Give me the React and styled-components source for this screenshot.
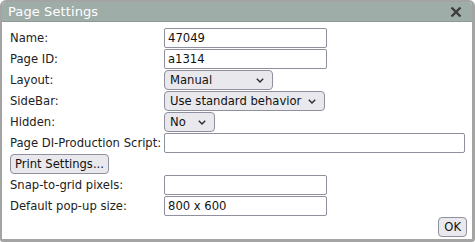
import React from "react";
import styled, { createGlobalStyle } from "styled-components";

const GlobalStyle = createGlobalStyle`
  html, body {
    margin: 0;
    padding: 0;
    background: #ffffff;
  }
  body {
    font-family: "DejaVu Sans", Verdana, sans-serif;
  }
`;

const font = `"DejaVu Sans", Verdana, sans-serif`;

const Dialog = styled.div`
  box-sizing: border-box;
  width: 475px;
  height: 242px;
  border: 2px solid #a4a4a4;
  border-bottom-width: 3px;
  border-right-width: 3px;
  border-radius: 6px 6px 3px 3px;
  background: #ffffff;
  display: flex;
  flex-direction: column;
  overflow: hidden;
`;

const TitleBar = styled.div`
  height: 19px;
  background: #9fada9;
  border-bottom: 1px solid #8c9995;
  display: flex;
  align-items: center;
  justify-content: space-between;
  padding: 0 10px 0 6px;
  color: #ffffff;
  font-family: ${font};
  font-size: 13px;
  letter-spacing: 0.1px;
`;

const CloseButton = styled.span`
  display: flex;
  width: 12px;
  height: 12px;
  cursor: pointer;
`;

const Body = styled.div`
  flex: 1;
  display: flex;
  flex-direction: column;
  padding: 5px 5px 0 8px;
`;

const Form = styled.div`
  display: grid;
  grid-template-columns: 154px 1fr;
  grid-auto-rows: 21px;
  align-items: center;
`;

const Label = styled.label`
  font-family: ${font};
  font-size: 11.6px;
  color: #222;
  white-space: nowrap;
`;

const Field = styled.div`
  display: flex;
  align-items: center;
`;

const TextInput = styled.input`
  box-sizing: border-box;
  width: ${({ $wide }) => ($wide ? "301px" : "163px")};
  height: 20px;
  border: 1px solid #8f8f9d;
  border-radius: 2px;
  padding: 0 3px;
  font-family: ${font};
  font-size: 11.6px;
  color: #111;
  background: #fff;
  outline: none;
`;

const SelectWrap = styled.div`
  position: relative;
  display: inline-flex;
  width: ${({ $w }) => $w}px;
  height: 20px;
`;

const Select = styled.select`
  box-sizing: border-box;
  appearance: none;
  width: 100%;
  height: 20px;
  border: 1px solid #8f8f9d;
  border-radius: 4px;
  padding: 0 20px 0 5px;
  font-family: ${font};
  font-size: 11.6px;
  color: #111;
  background-color: #e9e9ed;
`;

const Chevron = styled.svg`
  position: absolute;
  right: 9px;
  top: 8px;
  pointer-events: none;
`;

const Button = styled.button`
  box-sizing: border-box;
  height: 20px;
  border: 1px solid #8f8f9d;
  border-radius: 4px;
  background: #e9e9ed;
  padding: 0 ${({ $pad }) => $pad}px;
  font-family: ${font};
  font-size: 11.6px;
  color: #111;
  cursor: pointer;
`;

const ButtonRow = styled.div`
  grid-column: 1 / 3;
  display: flex;
  align-items: center;
`;

const Footer = styled.div`
  display: flex;
  justify-content: flex-end;
  padding-top: 1px;
`;

const rows = [
  { label: "Name:", value: "47049" },
  { label: "Page ID:", value: "a1314" },
];

function Dropdown({ width, value, options }) {
  return (
    <SelectWrap $w={width}>
      <Select defaultValue={value}>
        {options.map((o) => (
          <option key={o}>{o}</option>
        ))}
      </Select>
      <Chevron width="8" height="5" viewBox="0 0 8 5">
        <path d="M0.8 0.8 L4 4 L7.2 0.8" fill="none" stroke="#2b2b2b" strokeWidth="1.4" />
      </Chevron>
    </SelectWrap>
  );
}

export default function App() {
  return (
    <>
      <GlobalStyle />
      <Dialog>
        <TitleBar>
          <span>Page Settings</span>
          <CloseButton>
            <svg width="12" height="12" viewBox="0 0 12 12">
              <path d="M1.5 1.5 L10.5 10.5 M10.5 1.5 L1.5 10.5" stroke="#3c3c3c" strokeWidth="2.4" />
            </svg>
          </CloseButton>
        </TitleBar>
        <Body>
          <Form>
            {rows.map((r) => (
              <React.Fragment key={r.label}>
                <Label>{r.label}</Label>
                <Field>
                  <TextInput defaultValue={r.value} />
                </Field>
              </React.Fragment>
            ))}
            <Label>Layout:</Label>
            <Field>
              <Dropdown width={109} value="Manual" options={["Manual", "Automatic"]} />
            </Field>
            <Label>SideBar:</Label>
            <Field>
              <Dropdown
                width={161}
                value="Use standard behavior"
                options={["Use standard behavior", "Show", "Hide"]}
              />
            </Field>
            <Label>Hidden:</Label>
            <Field>
              <Dropdown width={51} value="No" options={["No", "Yes"]} />
            </Field>
            <Label>Page DI-Production Script:</Label>
            <Field>
              <TextInput $wide />
            </Field>
            <ButtonRow>
              <Button $pad={4}>Print Settings...</Button>
            </ButtonRow>
            <Label>Snap-to-grid pixels:</Label>
            <Field>
              <TextInput />
            </Field>
            <Label>Default pop-up size:</Label>
            <Field>
              <TextInput defaultValue="800 x 600" />
            </Field>
          </Form>
          <Footer>
            <Button $pad={5}>OK</Button>
          </Footer>
        </Body>
      </Dialog>
    </>
  );
}
